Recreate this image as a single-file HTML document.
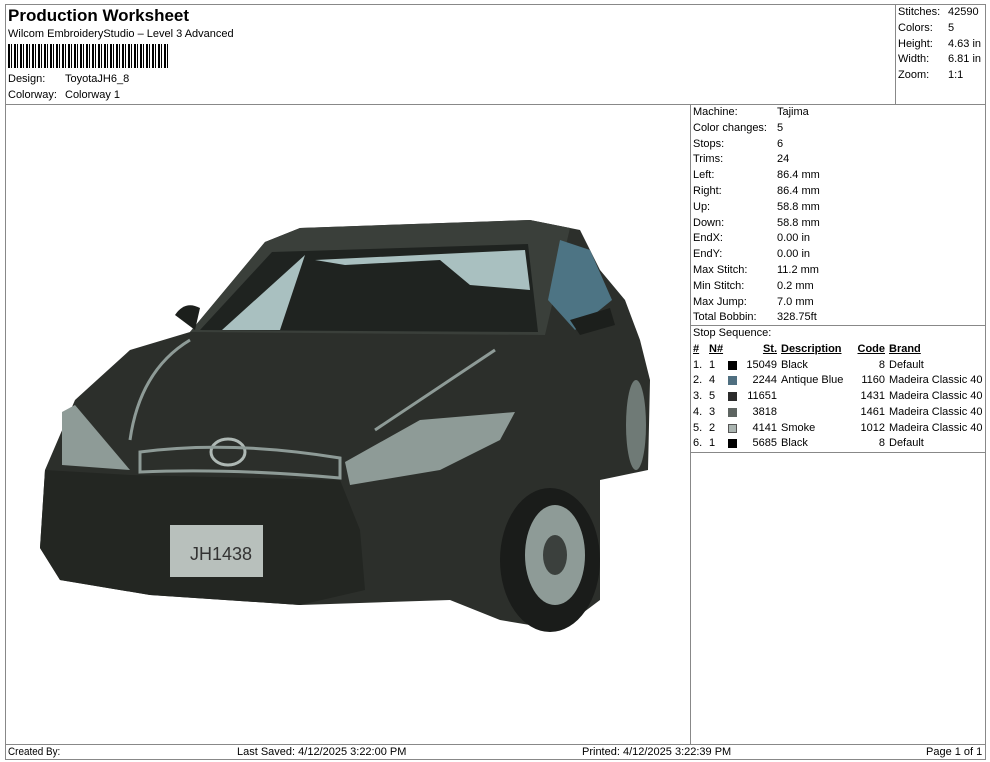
<!DOCTYPE html>
<html><head><meta charset="utf-8"><style>
*{margin:0;padding:0;box-sizing:border-box}
body{width:990px;height:762px;background:#fff;font-family:"Liberation Sans",Arial,sans-serif;font-size:11px;color:#000;position:relative;overflow:hidden}
.a{position:absolute;white-space:nowrap;line-height:13px}
.ln{position:absolute;background:#888}
</style></head><body>
<!-- frame lines -->
<div class="ln" style="left:5px;top:4px;width:981px;height:1px"></div>
<div class="ln" style="left:5px;top:4px;width:1px;height:756px"></div>
<div class="ln" style="left:985px;top:4px;width:1px;height:756px"></div>
<div class="ln" style="left:5px;top:104px;width:981px;height:1px"></div>
<div class="ln" style="left:895px;top:4px;width:1px;height:100px"></div>
<div class="ln" style="left:690px;top:104px;width:1px;height:640px"></div>
<div class="ln" style="left:690px;top:325px;width:296px;height:1px"></div>
<div class="ln" style="left:690px;top:452px;width:296px;height:1px"></div>
<div class="ln" style="left:5px;top:744px;width:981px;height:1px"></div>
<div class="ln" style="left:5px;top:759px;width:981px;height:1px"></div>

<div class="a" style="left:8px;top:6px;font-size:17px;font-weight:bold;line-height:20px">Production Worksheet</div>
<div class="a" style="left:8px;top:28px">Wilcom EmbroideryStudio – Level 3 Advanced</div>
<div class="a" style="left:8px;top:44px;width:162px;height:24px;background:repeating-linear-gradient(90deg,#000 0 2px,#fff 2px 3px,#000 3px 4px,#fff 4px 6px)"></div>
<div class="a" style="left:8px;top:73px">Design:</div><div class="a" style="left:65px;top:73px">ToyotaJH6_8</div>
<div class="a" style="left:8px;top:89px">Colorway:</div><div class="a" style="left:65px;top:89px">Colorway 1</div>

<div class="a" style="left:898px;top:6px">Stitches:</div><div class="a" style="left:948px;top:6px">42590</div>
<div class="a" style="left:898px;top:22px">Colors:</div><div class="a" style="left:948px;top:22px">5</div>
<div class="a" style="left:898px;top:38px">Height:</div><div class="a" style="left:948px;top:38px">4.63 in</div>
<div class="a" style="left:898px;top:53px">Width:</div><div class="a" style="left:948px;top:53px">6.81 in</div>
<div class="a" style="left:898px;top:69px">Zoom:</div><div class="a" style="left:948px;top:69px">1:1</div>

<div style="position:absolute;left:693px;top:105px;line-height:15.8px">
Machine:<br>Color changes:<br>Stops:<br>Trims:<br>Left:<br>Right:<br>Up:<br>Down:<br>EndX:<br>EndY:<br>Max Stitch:<br>Min Stitch:<br>Max Jump:<br>Total Bobbin:<br>Stop Sequence:</div>
<div style="position:absolute;left:777px;top:105px;line-height:15.8px">
Tajima<br>5<br>6<br>24<br>86.4 mm<br>86.4 mm<br>58.8 mm<br>58.8 mm<br>0.00 in<br>0.00 in<br>11.2 mm<br>0.2 mm<br>7.0 mm<br>328.75ft</div>

<div style="position:absolute;left:693px;top:342px;line-height:15.7px;font-size:11px">
<table style="border-collapse:collapse;font-size:11px;line-height:15.7px">
<tr style="font-weight:bold;text-decoration:underline"><td style="width:16px">#</td><td style="width:18px">N#</td><td style="width:50px;text-align:right">St.</td><td style="width:72px;padding-left:4px">Description</td><td style="width:36px;text-align:right">Code</td><td style="padding-left:4px">Brand</td></tr>
<tr><td>1.</td><td>1</td><td style="text-align:right"><span style="display:inline-block;width:9px;height:9px;background:#000;float:left;margin:3px 0 0 1px"></span>15049</td><td style="padding-left:4px">Black</td><td style="text-align:right">8</td><td style="padding-left:4px">Default</td></tr>
<tr><td>2.</td><td>4</td><td style="text-align:right"><span style="display:inline-block;width:9px;height:9px;background:#4f6f80;float:left;margin:3px 0 0 1px"></span>2244</td><td style="padding-left:4px">Antique Blue</td><td style="text-align:right">1160</td><td style="padding-left:4px">Madeira Classic 40</td></tr>
<tr><td>3.</td><td>5</td><td style="text-align:right"><span style="display:inline-block;width:9px;height:9px;background:#2b2b2b;float:left;margin:3px 0 0 1px"></span>11651</td><td></td><td style="text-align:right">1431</td><td style="padding-left:4px">Madeira Classic 40</td></tr>
<tr><td>4.</td><td>3</td><td style="text-align:right"><span style="display:inline-block;width:9px;height:9px;background:#5d6461;float:left;margin:3px 0 0 1px"></span>3818</td><td></td><td style="text-align:right">1461</td><td style="padding-left:4px">Madeira Classic 40</td></tr>
<tr><td>5.</td><td>2</td><td style="text-align:right"><span style="display:inline-block;width:9px;height:9px;background:#aab4b0;border:1px solid #555;float:left;margin:3px 0 0 1px"></span>4141</td><td style="padding-left:4px">Smoke</td><td style="text-align:right">1012</td><td style="padding-left:4px">Madeira Classic 40</td></tr>
<tr><td>6.</td><td>1</td><td style="text-align:right"><span style="display:inline-block;width:9px;height:9px;background:#000;float:left;margin:3px 0 0 1px"></span>5685</td><td style="padding-left:4px">Black</td><td style="text-align:right">8</td><td style="padding-left:4px">Default</td></tr>
</table></div>

<svg style="position:absolute;left:0;top:0" width="690" height="744">
<path d="M40,548 L45,470 L75,400 L130,350 L190,332 L265,242 L300,228 L530,220 L580,230 L600,270 L625,300 L640,340 L650,380 L648,470 L600,480 L600,600 L560,630 L500,620 L450,600 L300,605 L150,595 L60,580 Z" fill="#2c2f2b"/>
<path d="M190,332 L265,242 L300,228 L530,220 L570,228 L545,335 Z" fill="#3a3f3a"/>
<path d="M200,330 L272,252 L528,244 L538,332 Z" fill="#1f2320"/>
<path d="M222,330 L305,255 L280,330 Z" fill="#a9c0c0"/>
<path d="M315,260 L525,250 L530,290 L470,285 L440,260 L345,265 Z" fill="#a9c0c0"/>
<path d="M548,300 L560,240 L590,250 L612,300 L575,330 Z" fill="#4d7484"/>
<path d="M40,548 L45,470 L130,475 L340,480 L360,530 L365,590 L300,605 L150,595 L60,580 Z" fill="#232622"/>
<path d="M62,412 L75,405 L130,470 L62,465 Z" fill="#8e9b97"/>
<path d="M345,462 L420,420 L515,412 L500,440 L440,470 L350,485 Z" fill="#8e9b97"/>
<ellipse cx="228" cy="452" rx="17" ry="13" fill="none" stroke="#aeb8b4" stroke-width="3"/>
<path d="M140,452 Q230,440 340,458 L340,478 Q230,468 140,472Z" fill="none" stroke="#8e9b97" stroke-width="3"/>
<rect x="170" y="525" width="93" height="52" fill="#b8c0bc"/>
<text x="190" y="560" font-size="18" fill="#333" font-family="Liberation Sans">JH1438</text>
<ellipse cx="550" cy="560" rx="50" ry="72" fill="#1a1c1a"/>
<ellipse cx="555" cy="555" rx="30" ry="50" fill="#8e9b97"/>
<ellipse cx="555" cy="555" rx="12" ry="20" fill="#3b403d"/>
<ellipse cx="636" cy="425" rx="10" ry="45" fill="#6f7a76"/>
<path d="M175,315 Q185,300 200,308 L195,330 Z" fill="#1c1f1c"/>
<path d="M570,320 L610,308 L615,325 L580,335 Z" fill="#1c1f1c"/>
<path d="M375,430 L495,350" stroke="#8e9b97" stroke-width="3"/>
<path d="M130,440 Q140,370 190,340" stroke="#8e9b97" stroke-width="3" fill="none"/>
</svg>

<div class="a" style="left:8px;top:746px;transform:scaleX(.9);transform-origin:left">Created By:</div>
<div class="a" style="left:237px;top:746px">Last Saved: 4/12/2025 3:22:00 PM</div>
<div class="a" style="left:582px;top:746px">Printed: 4/12/2025 3:22:39 PM</div>
<div class="a" style="left:926px;top:746px">Page 1 of 1</div>
</body></html>
